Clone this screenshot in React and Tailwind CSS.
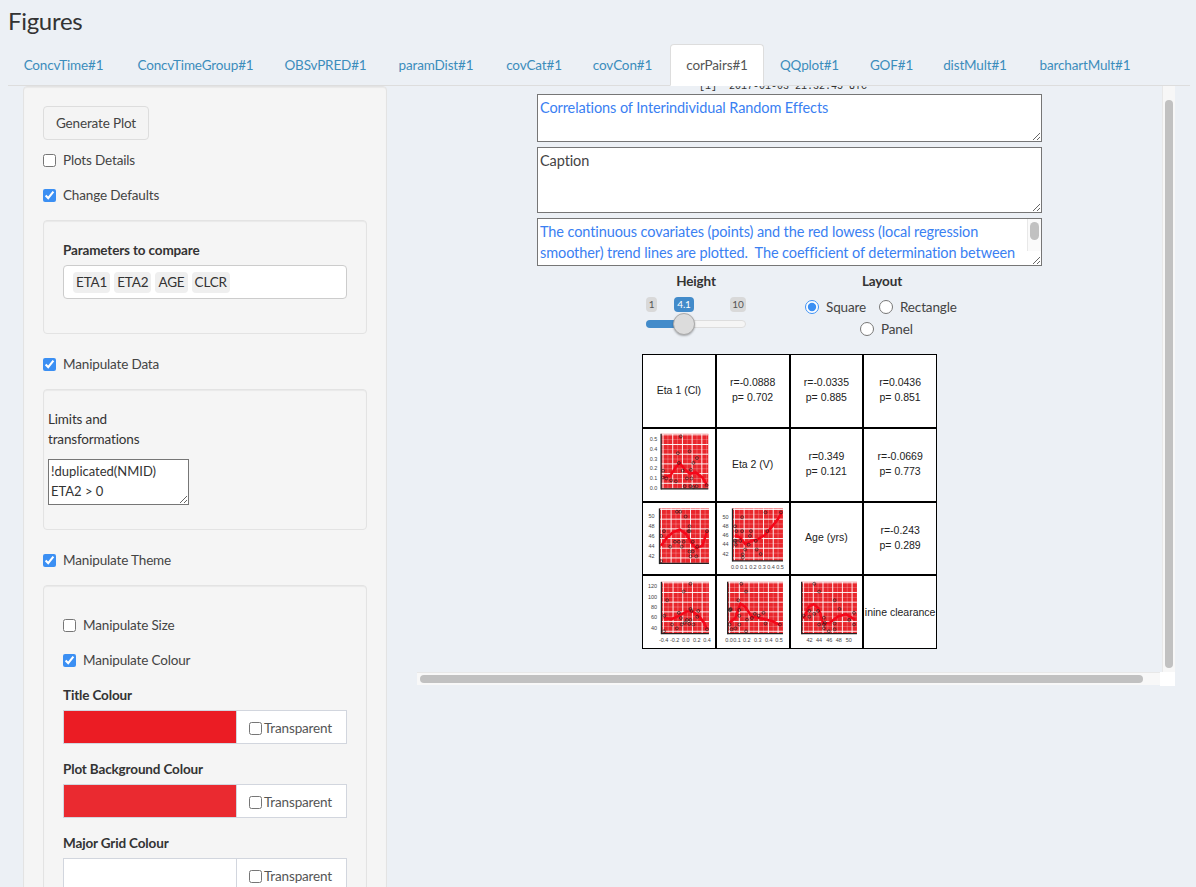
import { useId } from 'react';

const tabs = ['ConcvTime#1', 'ConcvTimeGroup#1', 'OBSvPRED#1', 'paramDist#1', 'covCat#1', 'covCon#1', 'corPairs#1', 'QQplot#1', 'GOF#1', 'distMult#1', 'barchartMult#1'];
const tabWidths = [111, 153, 107, 114, 82, 95, 94, 91, 73, 94, 126];

function Check({ label, checked, className = '' }) {
    return (
        <label className={`flex items-center h-5 text-[#444] ${className}`}>
            <input type="checkbox" defaultChecked={checked} className="w-[13px] h-[13px] m-0 mr-[7px] accent-[#3b8ff3]" />
            {label}
        </label>
    );
}

function Well({ className = '', children }) {
    return <div className={`bg-[#f5f5f5] border border-[#e3e3e3] rounded shadow-[inset_0_1px_1px_rgba(0,0,0,0.05)] ${className}`}>{children}</div>;
}

function ColourInput({ label, colour }) {
    return (
        <div className="mt-[15px]">
            <div className="h-5 leading-5 font-bold text-[#333]">{label}</div>
            <div className="mt-[5px] flex h-[34px] border border-[#d2d6de] bg-white">
                <div className={`w-[172px] ${colour}`}></div>
                <label className="flex-1 flex items-center pl-3 pt-[2px] border-l border-[#d2d6de] text-[#555]">
                    <input type="checkbox" className="w-[13px] h-[13px] m-0 mr-[2px]" />
                    Transparent
                </label>
            </div>
        </div>
    );
}

const plots = {
    a: {
        box: [56, 15, 202, 185],
        yTicks: [['0.5', 33], ['0.4', 63], ['0.3', 93], ['0.2', 123], ['0.1', 153], ['0.0', 183]], yLabelX: 44,
        xTicks: [],
        pts: [[117, 23], [108, 75], [144, 69], [167, 90], [156, 105], [62, 129], [111, 105], [123, 129], [148, 126], [72, 153], [87, 159], [102, 162], [136, 153], [150, 153], [129, 177], [147, 177], [156, 180], [166, 177], [197, 174], [62, 150]],
        line: [[62, 150], [84, 145], [99, 122], [114, 105], [129, 125], [144, 138], [164, 135], [184, 150], [199, 175]],
    },
    b: {
        box: [51, 17, 204, 187],
        yTicks: [['50', 42], ['48', 72], ['46', 102], ['44', 134], ['42', 164]], yLabelX: 36,
        xTicks: [],
        pts: [[56, 180], [56, 102], [65, 87], [84, 135], [99, 120], [105, 27], [115, 27], [111, 120], [126, 120], [120, 135], [132, 42], [144, 72], [141, 87], [144, 87], [154, 120], [168, 135], [144, 150], [154, 150], [147, 165], [165, 165], [198, 87]],
        line: [[56, 132], [74, 107], [94, 90], [114, 82], [134, 97], [149, 122], [164, 140], [184, 132], [198, 87]],
    },
    c: {
        box: [48, 17, 204, 179],
        yTicks: [['50', 44], ['48', 72], ['46', 100], ['44', 129], ['42', 158]], yLabelX: 36,
        xTicks: [['0.0', 55], ['0.1', 83], ['0.2', 111], ['0.3', 139], ['0.4', 167], ['0.5', 195]], xLabelY: 204,
        pts: [[56, 72], [60, 87], [55, 117], [58, 117], [58, 129], [72, 117], [78, 44], [78, 87], [80, 159], [80, 169], [87, 144], [98, 129], [102, 102], [105, 87], [120, 117], [123, 144], [135, 158], [150, 29], [156, 87], [198, 29]],
        line: [[55, 100], [72, 107], [87, 127], [107, 117], [127, 112], [147, 100], [167, 77], [187, 52], [200, 30]],
    },
    d: {
        box: [57, 18, 204, 178],
        yTicks: [['120', 33], ['100', 65], ['80', 97], ['60', 129], ['40', 162]], yLabelX: 43,
        xTicks: [['-0.4', 64], ['-0.2', 98], ['0.0', 132], ['0.2', 166], ['0.4', 198]], xLabelY: 204,
        pts: [[65, 171], [75, 75], [66, 123], [90, 150], [105, 162], [111, 114], [117, 130], [120, 150], [126, 48], [129, 145], [136, 136], [143, 148], [147, 24], [147, 102], [147, 136], [150, 108], [156, 150], [168, 126], [171, 108], [198, 165]],
        line: [[64, 130], [89, 133], [114, 122], [134, 110], [154, 110], [174, 125], [189, 145], [198, 165]],
    },
    e: {
        box: [33, 18, 204, 178],
        yTicks: [], yLabelX: 0,
        xTicks: [['0.0', 37], ['0.1', 62], ['0.2', 92], ['0.3', 126], ['0.4', 160], ['0.5', 192]], xLabelY: 204,
        pts: [[39, 105], [42, 105], [39, 150], [45, 165], [57, 162], [66, 75], [69, 150], [69, 123], [75, 24], [90, 48], [90, 171], [93, 135], [108, 130], [117, 117], [129, 123], [144, 114], [150, 147], [195, 150], [42, 102], [69, 105]],
        line: [[39, 145], [57, 130], [72, 85], [87, 95], [107, 125], [142, 132], [172, 140], [195, 152]],
    },
    f: {
        box: [33, 18, 204, 178],
        yTicks: [], yLabelX: 0,
        xTicks: [['42', 57], ['44', 87], ['46', 118], ['48', 148], ['50', 179]], xLabelY: 204,
        pts: [[39, 123], [57, 126], [57, 108], [72, 24], [72, 117], [87, 48], [84, 108], [87, 150], [102, 150], [102, 129], [117, 171], [135, 75], [135, 147], [135, 165], [150, 102], [180, 136], [195, 114], [195, 150], [102, 162], [105, 145]],
        line: [[39, 132], [55, 95], [70, 87], [85, 100], [100, 148], [120, 145], [145, 125], [170, 118], [198, 135]],
    },
};

function Plot({ p }) {
    const [x0, y0, x1, y1] = p.box;
    const vs = [];
    const hs = [];
    for (let x = x0 + 6; x < x1; x += 15) vs.push(x);
    for (let y = y0 + 3; y < y1; y += 15) hs.push(y);
    const id = useId();
    return (
        <svg viewBox="0 0 222 222" className="w-full h-full block">
            <defs>
                <clipPath id={id}><rect x={x0} y={y0} width={x1 - x0} height={y1 - y0} /></clipPath>
            </defs>
            <rect x={x0} y={y0} width={x1 - x0} height={y1 - y0} fill="#e9262c" />
            {vs.map((x, i) => <line key={i} x1={x} x2={x} y1={y0} y2={y1} stroke="#fff" strokeWidth={i % 2 ? 1.5 : 3} opacity={i % 2 ? 0.5 : 0.95} />)}
            {hs.map((y, i) => <line key={i} x1={x0} x2={x1} y1={y} y2={y} stroke="#fff" strokeWidth={i % 2 ? 1.5 : 3} opacity={i % 2 ? 0.5 : 0.95} />)}
            <polyline points={p.line.map(q => q.join(',')).join(' ')} fill="none" stroke="#f5081a" strokeWidth="8" strokeLinejoin="round" clipPath={`url(#${id})`} />
            {p.pts.map((q, i) => <circle key={i} cx={q[0]} cy={q[1]} r="4.5" fill="none" stroke="#222" strokeWidth="2" />)}
            <line x1={x0} x2={x0} y1={y0} y2={y1 + 2} stroke="#222" strokeWidth="4" />
            <line x1={x0} x2={x1} y1={y1} y2={y1} stroke="#222" strokeWidth="4" />
            {p.yTicks.map(([t, y]) => <text key={t} x={p.yLabelX} y={y + 5} textAnchor="end" fontSize="17" fill="#444" fontFamily="Liberation Sans, sans-serif">{t}</text>)}
            {p.xTicks.map(([t, x]) => <text key={t} x={x} y={p.xLabelY} textAnchor="middle" fontSize="17" fill="#444" fontFamily="Liberation Sans, sans-serif">{t}</text>)}
        </svg>
    );
}

function TextCell({ children }) {
    return (
        <div className="border border-black bg-white flex items-center justify-center text-center overflow-hidden whitespace-nowrap tracking-normal text-[10.5px] leading-[15px] pb-px text-[#222] [font-family:'Liberation_Sans',sans-serif]">
            <div>{children}</div>
        </div>
    );
}

function PlotCell({ p }) {
    return <div className="border border-black bg-white overflow-hidden"><Plot p={p} /></div>;
}

function Corr({ r, p }) {
    return <TextCell>r={r}<br />p= {p}</TextCell>;
}

export default function App() {
    return (
        <div className="h-[887px] overflow-hidden bg-[#ecf0f5] text-[13.5px] tracking-[-0.15px] leading-5 [font-family:Lato,sans-serif]">
            <h1 className="pl-2 pt-[7px] h-[44px] text-[24px] tracking-[-0.3px] leading-[28px] text-[#333]">Figures</h1>

            <div className="ml-2 mr-[6px] h-[42px] flex border-b border-[#ddd]">
                {tabs.map((t, i) => (
                    <div
                        key={t}
                        style={{ width: tabWidths[i] }}
                        className={t === 'corPairs#1'
                            ? 'h-[42px] flex items-center justify-center bg-white border border-[#ddd] border-b-white rounded-t text-[#555]'
                            : 'h-[41px] flex items-center justify-center text-[#3c8dbc]'}
                    >
                        {t}
                    </div>
                ))}
            </div>

            <div className="flex items-start">
                <Well className="ml-[23px] w-[364px] px-[19px] pt-[19px] h-[900px] shrink-0">
                    <button className="w-[106px] h-[34px] border border-[#ddd] rounded bg-[#f4f4f4] text-[#444]">Generate Plot</button>
                    <Check label="Plots Details" className="mt-[10px]" />
                    <Check label="Change Defaults" checked className="mt-[15px]" />

                    <Well className="mt-[15px] h-[114px] px-[19px] pt-[19px]">
                        <div className="h-5 leading-5 font-bold text-[#333]">Parameters to compare</div>
                        <div className="mt-[5px] h-[34px] flex items-center gap-1 pl-[9px] bg-white border border-[#ccc] rounded text-[#333]">
                            <span className="px-[3px] h-[21px] bg-[#efefef] rounded-sm">ETA1</span>
                            <span className="px-[3px] h-[21px] bg-[#efefef] rounded-sm">ETA2</span>
                            <span className="px-[3px] h-[21px] bg-[#efefef] rounded-sm">AGE</span>
                            <span className="px-[3px] h-[21px] bg-[#efefef] rounded-sm">CLCR</span>
                        </div>
                    </Well>

                    <Check label="Manipulate Data" checked className="mt-5" />
                    <Well className="mt-[15px] h-[141px] px-[4px] pt-[19px]">
                        <div className="text-[#333]">Limits and<br />transformations</div>
                        <textarea
                            readOnly
                            defaultValue={'!duplicated(NMID)\nETA2 > 0'}
                            className="mt-[10px] block w-[141px] h-[46px] border border-[#767676] bg-white px-[2px] py-px text-[13px] tracking-normal leading-5 text-[#333] overflow-hidden"
                        />
                    </Well>

                    <Check label="Manipulate Theme" checked className="mt-5" />
                    <Well className="mt-[15px] h-[400px] px-[19px] pt-[29px]">
                        <Check label="Manipulate Size" />
                        <Check label="Manipulate Colour" checked className="mt-[15px]" />
                        <ColourInput label="Title Colour" colour="bg-[#eb1c24]" />
                        <ColourInput label="Plot Background Colour" colour="bg-[#ea2a30]" />
                        <ColourInput label="Major Grid Colour" colour="bg-white" />
                    </Well>
                </Well>

                <div className="relative ml-[30px] w-[758px] h-[600px] overflow-hidden">
                    <div className="-mt-[9px] h-5 text-center leading-5 text-[#333] pr-[20px] text-[10px] tracking-normal [font-family:'Liberation_Mono',monospace]">[1] "2017-01-03 21:32:45 UTC"</div>
                    <div className="ml-[120px] w-[505px] -mt-[3px]">
                        <textarea readOnly defaultValue="Correlations of Interindividual Random Effects" className="block w-full h-12 border border-[#767676] bg-white px-[2px] pt-[2px] text-[14.5px] tracking-[-0.1px] leading-[21px] text-[#3a80f2]" />
                        <textarea readOnly defaultValue="Caption" className="block mt-[5px] w-full h-[66px] border border-[#767676] bg-white px-[2px] pt-[2px] text-[14.5px] tracking-[-0.1px] leading-[21px] text-[#444]" />
                        <div className="relative mt-[5px] h-12">
                            <textarea
                                readOnly
                                defaultValue={'The continuous covariates (points) and the red lowess (local regression\nsmoother) trend lines are plotted.  The coefficient of determination between'}
                                className="block w-full h-12 border border-[#767676] bg-white px-[2px] pt-[2px] text-[14.5px] tracking-[-0.1px] leading-[21px] text-[#3a80f2] overflow-hidden whitespace-pre"
                            />
                            <div className="absolute right-px top-px w-[14px] h-8 bg-[#fafafa] border-l border-[#e8e8e8]">
                                <div className="mx-auto mt-[3px] w-[9px] h-[18px] rounded-full bg-[#c1c1c1]"></div>
                            </div>
                        </div>

                        <div className="flex mt-[5px]">
                            <div className="ml-[109px] w-[100px]">
                                <div className="text-center font-bold text-[#333] h-5">Height</div>
                                <div className="relative mt-[5px] h-[40px]">
                                    <span className="absolute left-0 top-[1px] w-[11px] h-[15px] leading-[15px] text-[10px] text-center bg-[#d9d9d9] text-[#555] rounded-sm">1</span>
                                    <span className="absolute left-[28px] top-[1px] w-[20px] h-[15px] leading-[15px] text-[10px] text-center bg-[#428bca] text-white rounded-sm">4.1</span>
                                    <span className="absolute right-0 top-[1px] w-[16px] h-[15px] leading-[15px] text-[10px] text-center bg-[#d9d9d9] text-[#555] rounded-sm">10</span>
                                    <div className="absolute left-0 right-0 top-[24px] h-2 rounded-full bg-[#f5f5f5] border border-[#ddd]"></div>
                                    <div className="absolute left-0 w-[38px] top-[24px] h-2 rounded-l-full bg-[#428bca]"></div>
                                    <div className="absolute left-[27px] top-[17px] w-[22px] h-[22px] rounded-full bg-[#dcdcdc] border border-[#aaa] shadow-[0_1px_2px_rgba(0,0,0,0.3)]"></div>
                                </div>
                            </div>
                            <div className="ml-[59px] w-[160px] text-[#444]">
                                <div className="text-center font-bold text-[#333] h-5 pr-[6px]">Layout</div>
                                <div className="flex items-center h-[22px] mt-[5px]">
                                    <input type="radio" name="layout" defaultChecked className="m-0 w-[14px] h-[14px] accent-[#3b8ff3]" />
                                    <span className="ml-[7px] w-[53px]">Square</span>
                                    <input type="radio" name="layout" className="m-0 w-[14px] h-[14px]" />
                                    <span className="ml-[7px]">Rectangle</span>
                                </div>
                                <div className="flex items-center h-[22px] pl-[55px]">
                                    <input type="radio" name="layout" className="m-0 w-[14px] h-[14px]" />
                                    <span className="ml-[7px]">Panel</span>
                                </div>
                            </div>
                        </div>
                    </div>

                    <div className="ml-[225px] mt-[14px] w-[295px] h-[295px] grid grid-cols-4 grid-rows-4">
                        <TextCell>Eta 1 (Cl)</TextCell>
                        <Corr r="-0.0888" p="0.702" />
                        <Corr r="-0.0335" p="0.885" />
                        <Corr r="0.0436" p="0.851" />
                        <PlotCell p={plots.a} />
                        <TextCell>Eta 2 (V)</TextCell>
                        <Corr r="0.349" p="0.121" />
                        <Corr r="-0.0669" p="0.773" />
                        <PlotCell p={plots.b} />
                        <PlotCell p={plots.c} />
                        <TextCell>Age (yrs)</TextCell>
                        <Corr r="-0.243" p="0.289" />
                        <PlotCell p={plots.d} />
                        <PlotCell p={plots.e} />
                        <PlotCell p={plots.f} />
                        <div className="border border-black bg-white overflow-hidden flex items-center justify-center whitespace-nowrap tracking-normal text-[10.5px] text-[#222] [font-family:'Liberation_Sans',sans-serif]">inine clearance</div>
                    </div>

                    <div className="absolute right-0 top-0 w-[13px] h-[586px] bg-[#f7f7f7] border-l border-[#e8e8e8]">
                        <div className="mx-auto mt-[14px] w-2 h-[568px] rounded-full bg-[#c1c1c1]"></div>
                    </div>
                    <div className="absolute left-0 top-[586px] w-[743px] h-[13px] bg-[#f8f8f8] border-t border-[#e8e8e8]">
                        <div className="ml-[3px] mt-[2px] w-[723px] h-2 rounded-full bg-[#c1c1c1]"></div>
                    </div>
                    <div className="absolute right-0 top-[586px] w-[15px] h-[14px] bg-white"></div>
                </div>
            </div>
        </div>
    );
}
